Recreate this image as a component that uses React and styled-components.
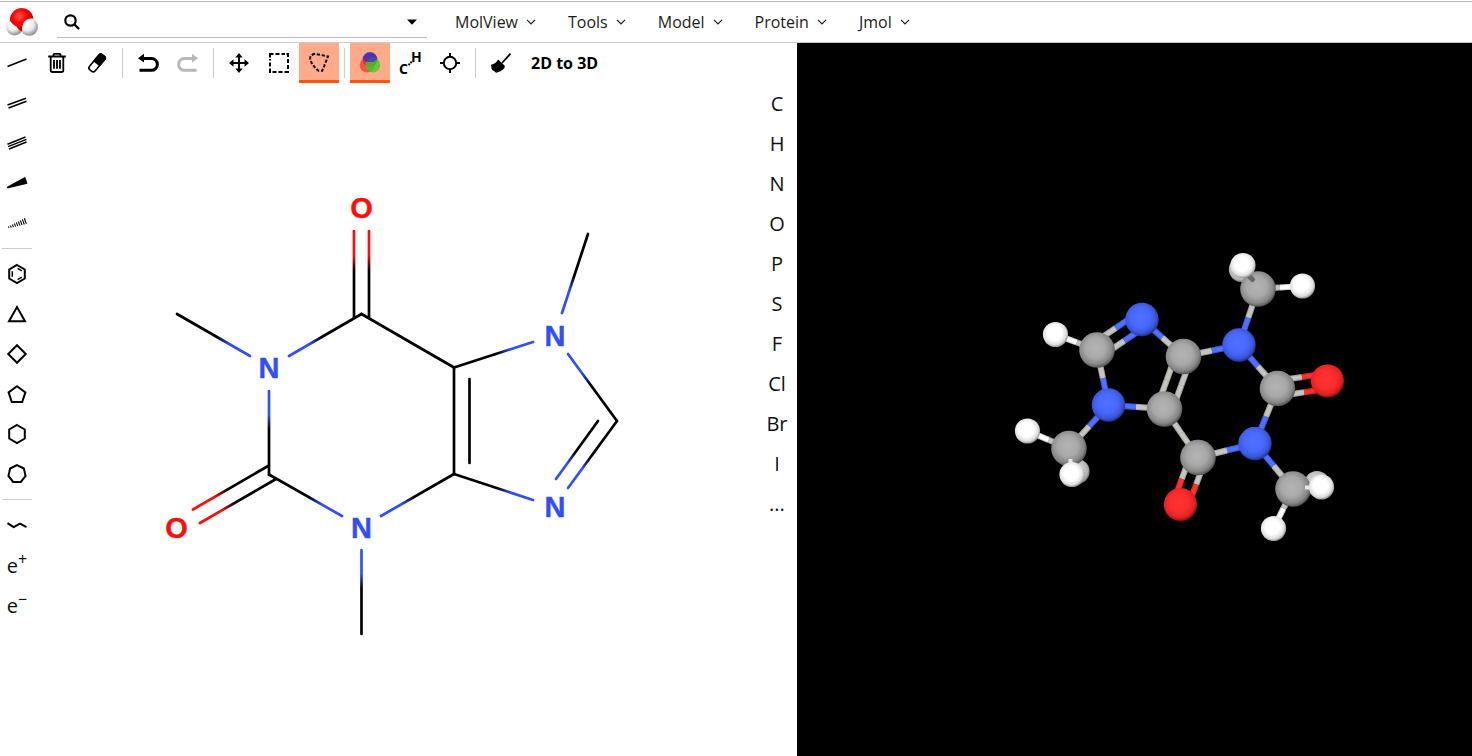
import React from 'react';
import styled, { createGlobalStyle } from 'styled-components';

const GlobalStyle = createGlobalStyle`
  *, *::before, *::after { box-sizing: border-box; }
  body {
    margin: 0;
    background: #fff;
    color: #000;
    font-family: "Open Sans", "Noto Sans", sans-serif;
    font-size: 16px;
  }
  button, input { font: inherit; color: inherit; }
`;

const Page = styled.div`
  min-height: 100vh;
  display: flex;
  flex-direction: column;
`;

const Header = styled.header`
  display: flex;
  align-items: stretch;
  height: 42px;
  margin-top: 1px;
  padding-left: 4px;
  border-top: 1px solid #bbb;
  border-bottom: 1px solid #ccc;
`;

const LogoLink = styled.a`
  display: flex;
  align-items: center;
  width: 36px;
  margin-right: 17px;
`;

const SearchForm = styled.form`
  display: flex;
  align-items: center;
  flex: 0 1 370px;
  margin-bottom: 4px;
  border-bottom: 1px solid #bbb;
`;

const SearchInput = styled.input`
  flex: 1;
  min-width: 0;
  padding: 0 8px;
  border: 0;
  outline: 0;
  background: transparent;
`;

const BareButton = styled.button`
  display: flex;
  align-items: center;
  justify-content: center;
  padding: 0;
  border: 0;
  background: transparent;
  cursor: pointer;
`;

const SearchButton = styled(BareButton)`
  width: 30px;
  height: 30px;
  margin-top: 4px;
`;

const Menu = styled.nav`
  display: flex;
  gap: 32px;
  padding-left: 28px;
`;

const MenuButton = styled(BareButton)`
  gap: 8px;
  color: #1c1c1c;
`;

const Main = styled.main`
  flex: 1;
  display: grid;
  grid-template-columns: minmax(0, 797fr) minmax(0, 675fr);
`;

const Sketcher = styled.section`
  display: grid;
  grid-template-columns: 34px minmax(0, 1fr) 40px;
  grid-template-rows: 40px minmax(0, 1fr);
`;

const BondTools = styled.div`
  grid-row: 1 / 3;
  display: flex;
  flex-direction: column;
`;

const TopTools = styled.div`
  grid-column: 2 / 4;
  display: flex;
  padding-left: 3px;
`;

const Elements = styled.div`
  display: flex;
  flex-direction: column;
`;

const ToolButton = styled(BareButton)`
  flex: 0 0 40px;
  height: 40px;
  color: ${(p) => (p.disabled ? '#b8b8b8' : '#000')};
  background: ${(p) => (p.$active ? '#ffaa88' : 'transparent')};
  box-shadow: ${(p) => (p.$active ? 'inset 0 -3px #ff5511' : 'none')};
`;

const TextTool = styled(BareButton)`
  padding: 0 10px;
  font-weight: 700;
`;

const SymbolButton = styled(ToolButton)`
  font-size: 20px;
  color: #111;
`;

const Charge = styled.sup`
  font-size: 16px;
  line-height: 16px;
  align-self: flex-start;
  margin-top: 6px;
`;

const Divider = styled.span`
  flex: 0 0 1px;
  align-self: stretch;
  background: #ccc;
  margin: ${(p) => (p.$row ? '5px 2px' : '5px')};
`;

const Canvas = styled.svg`
  display: block;
  width: 100%;
  height: 100%;
  min-height: 0;
`;

const Viewer = styled.section`
  background: #000;
  display: grid;
`;

const Icon = ({ children, width = 2 }) => (
  <svg
    width="32"
    height="32"
    viewBox="-16 -16 32 32"
    fill="none"
    stroke="currentColor"
    strokeWidth={width}
    aria-hidden="true"
  >
    {children}
  </svg>
);

const ring = (n, r, turn = -90) =>
  Array.from({ length: n }, (_, i) => {
    const a = ((turn + (360 * i) / n) * Math.PI) / 180;
    return `${(r * Math.cos(a)).toFixed(2)},${(r * Math.sin(a)).toFixed(2)}`;
  }).join(' ');

const bondIcons = [
  ['Single bond', <Icon width={1.6}><path d="M-9.5 3.5 9.5-4" /></Icon>],
  ['Double bond', <Icon width={1.5}><path d="M-9.5 2 9-4.8M-8.5 5 9.5-1.8" /></Icon>],
  ['Triple bond', <Icon width={1.5}><path d="M-9.5 1.2 8.5-6M-9 3.6 9.5-3.6M-8 6 9.5-1" /></Icon>],
  ['Wedge bond', <Icon width={0.8}><path fill="currentColor" d="M-9.7 4 8-5.6 10 .4-9.4 5Z" /></Icon>],
  ['Hash bond', (
    <Icon width={1.1}>
      <path d="M-8.6 3.4l.5 1.4M-6.6 2.5l.8 2M-4.6 1.5l1 2.6M-2.6.5l1.2 3.1M-.6-.5l1.4 3.6M1.4-1.5l1.6 4.1M3.4-2.5l1.7 4.6M5.4-3.6l1.9 5.1M7.3-4.8l2 5.6" />
    </Icon>
  )],
];

const ringIcons = [
  ['Benzene', (
    <Icon>
      <polygon points={ring(6, 9)} />
      <path strokeWidth="1.5" d="M.6-5.6 4.8-3.1M-4.7-2.7V2.7M.6 5.6 4.8 3.1" />
    </Icon>
  )],
  ['Cyclopropane', <Icon><polygon points="0,-7 8,7.2 -8,7.2" /></Icon>],
  ['Cyclobutane', <Icon><polygon points={ring(4, 8.8)} /></Icon>],
  ['Cyclopentane', <Icon><polygon points="0,-7.8 8.4,-1.6 5.2,8 -5.2,8 -8.4,-1.6" /></Icon>],
  ['Cyclohexane', <Icon><polygon points={ring(6, 9)} /></Icon>],
  ['Cycloheptane', <Icon><polygon points={ring(7, 8.8)} /></Icon>],
];

const Undo = () => (
  <>
    <path strokeWidth="3" d="M-5-4.5H3.5a5.8 5.8 0 0 1 0 11.8H-8.5" />
    <path stroke="none" fill="currentColor" d="M-10-4.8-4-9.3V-.5Z" />
  </>
);

const elements = ['C', 'H', 'N', 'O', 'P', 'S', 'F', 'Cl', 'Br', 'I', '...'];
const menus = ['MolView', 'Tools', 'Model', 'Protein', 'Jmol'];

/* Structural formula: [x1, y1, x2, y2, start colour, end colour] */
const BLUE = '#304ff7';
const RED = '#ff0d0d';
const K = '#000';
const flatBonds = [
  [354, 231, 354, 318, RED, K],
  [369, 231, 369, 318, RED, K],
  [289, 356, 361.5, 314, BLUE, K],
  [250, 356, 177, 314, BLUE, K],
  [269, 391, 269, 475, BLUE, K],
  [193, 509.5, 269, 465.5, RED, K],
  [200, 523, 276, 479, RED, K],
  [342, 516, 269, 474.5, BLUE, K],
  [381, 516, 454, 474, BLUE, K],
  [361.5, 550, 361.5, 634, BLUE, K],
  [361.5, 314, 454, 367.5, K, K],
  [533, 342, 454, 367.5, BLUE, K],
  [454, 367.5, 454, 474, K, K],
  [469.5, 379, 469.5, 463, K, K],
  [533, 500, 454, 474, BLUE, K],
  [562, 313, 588, 234, BLUE, K],
  [568, 354, 617, 421, BLUE, K],
  [568, 488, 617, 421, BLUE, K],
  [556, 479, 598, 421, BLUE, K],
];
const flatLabels = [
  ['O', 361.5, 208], ['N', 269, 368], ['O', 176.5, 528],
  ['N', 361.5, 528], ['N', 555, 336], ['N', 555, 507],
];

const Formula = () => (
  <Canvas viewBox="34 83 723 673" role="img" aria-label="Caffeine structural formula">
    <defs>
      {flatBonds.map(([x1, y1, x2, y2, a, b], i) => (
        <linearGradient key={i} id={`bond${i}`} gradientUnits="userSpaceOnUse" x1={x1} y1={y1} x2={x2} y2={y2}>
          <stop offset="0.28" stopColor={a} />
          <stop offset="0.46" stopColor={b} />
        </linearGradient>
      ))}
    </defs>
    {flatBonds.map(([x1, y1, x2, y2], i) => (
      <line key={i} x1={x1} y1={y1} x2={x2} y2={y2} stroke={`url(#bond${i})`} strokeWidth="2.7" strokeLinecap="round" />
    ))}
    {flatLabels.map(([t, x, y], i) => (
      <text
        key={i}
        x={x}
        y={y + 10}
        textAnchor="middle"
        fill={t === 'O' ? RED : BLUE}
        stroke={t === 'O' ? RED : BLUE}
        strokeWidth="0.4"
        fontFamily="'Liberation Sans', Arial, sans-serif"
        fontWeight="700"
        fontSize="29"
      >
        {t}
      </text>
    ))}
  </Canvas>
);

/* Ball-and-stick model */
const radius = { C: 17.8, N: 16.7, O: 16.6, H: 12.6 };
const stick = {
  C: ['#a2a29e', '#c4c4c0'],
  N: ['#3d5ae0', '#5070ff'],
  O: ['#d82222', '#ff3030'],
  H: ['#d0d0d0', '#ffffff'],
};
const atoms = {
  c8: ['C', 1097, 350], n9: ['N', 1142, 319.5], c4: ['C', 1183.5, 356.5],
  c5: ['C', 1164.5, 409], n7: ['N', 1108.5, 405], n3: ['N', 1239, 345],
  c2: ['C', 1277.5, 388.5], o2: ['O', 1327.5, 381], n1: ['N', 1255, 443.5],
  c6: ['C', 1198, 457.5], o6: ['O', 1180.5, 504.5],
  m3: ['C', 1258, 289], m7: ['C', 1069, 448.5], m1: ['C', 1293, 489],
  h8: ['H', 1055.5, 334.5],
  h3a: ['H', 1241.5, 269.5], h3b: ['H', 1243, 265.5], h3c: ['H', 1302.5, 286],
  h7a: ['H', 1027.5, 431], h7b: ['H', 1077, 471.5], h7c: ['H', 1072, 474.5],
  h1a: ['H', 1317, 483.5], h1b: ['H', 1321.5, 487], h1c: ['H', 1273.5, 528.5],
};
const sticks = [
  ['c8', 'n9', 2], ['n9', 'c4'], ['c4', 'c5', 2], ['c5', 'n7'], ['n7', 'c8'],
  ['c4', 'n3'], ['n3', 'c2'], ['c2', 'o2', 2], ['c2', 'n1'], ['n1', 'c6'],
  ['c6', 'c5'], ['c6', 'o6', 2], ['n3', 'm3'], ['n7', 'm7'], ['n1', 'm1'],
  ['h8', 'c8'], ['h3c', 'm3'], ['h7a', 'm7'], ['h1c', 'm1'],
];
const farAtoms = ['h3a', 'h7b', 'h1a'];
const nearAtoms = ['h3b', 'h7c', 'h1b'];
const midAtoms = Object.keys(atoms).filter((k) => !farAtoms.includes(k) && !nearAtoms.includes(k));

const Ball = ({ id, dim }) => {
  const [el, x, y] = atoms[id];
  return <circle cx={x} cy={y} r={radius[el]} fill={`url(#ball${el})`} opacity={dim ? 0.8 : 1} />;
};

const Stick = ({ from, to, order = 1 }) => {
  const [ea, ax, ay] = atoms[from];
  const [eb, bx, by] = atoms[to];
  const len = Math.hypot(bx - ax, by - ay);
  const ux = (bx - ax) / len;
  const uy = (by - ay) / len;
  const mid = ea === 'H' ? (len + radius.H - radius.C) / 2 + 3 : (radius[ea] + len - radius[eb]) / 2;
  const shifts = order === 2 ? [-7.7, 7.7] : [0];
  return shifts.map((s) => {
    const ox = -uy * s;
    const oy = ux * s;
    const mx = ax + ux * mid;
    const my = ay + uy * mid;
    return [6.2, 4.2].map((w, i) => (
      <g key={`${s}-${w}`} strokeWidth={w}>
        <line x1={ax + ox} y1={ay + oy} x2={mx + ox} y2={my + oy} stroke={stick[ea][i]} />
        <line x1={mx + ox} y1={my + oy} x2={bx + ox} y2={by + oy} stroke={stick[eb][i]} />
      </g>
    ));
  });
};

const balls = {
  C: ['#b4b4b4', '#a8a8a8', '#868686', '#484848'],
  N: ['#5070ff', '#4869ff', '#3a56d8', '#1e2d78'],
  O: ['#ff3434', '#ff2c2c', '#e02222', '#780c0c'],
  H: ['#ffffff', '#ffffff', '#dedede', '#808080'],
};

const Model = () => (
  <Canvas viewBox="797 43 675 713" role="img" aria-label="Caffeine ball-and-stick model">
    <defs>
      {Object.entries(balls).map(([el, c]) => (
        <radialGradient key={el} id={`ball${el}`} cx="0.46" cy="0.44" r="0.58">
          <stop offset="0" stopColor={c[0]} />
          <stop offset="0.5" stopColor={c[1]} />
          <stop offset="0.8" stopColor={c[2]} />
          <stop offset="1" stopColor={c[3]} />
        </radialGradient>
      ))}
    </defs>
    {farAtoms.map((id) => <Ball key={id} id={id} dim />)}
    {sticks.map(([a, b, n]) => <Stick key={a + b} from={a} to={b} order={n} />)}
    {midAtoms.map((id) => <Ball key={id} id={id} />)}
    <path d="M1249 276 1252.500 279.500" stroke="#686868" strokeWidth="5" strokeLinecap="round" />
    <path d="M1070.500 459v6M1311 487.500h-6" stroke="#e8e8e8" strokeWidth="4" />
    {nearAtoms.map((id) => <Ball key={id} id={id} />)}
  </Canvas>
);

const Logo = () => (
  <svg width="36" height="36" viewBox="4 4 36 36" aria-hidden="true">
    <defs>
      <radialGradient id="logoRed" cx="0.4" cy="0.35" r="0.65">
        <stop offset="0" stopColor="#ff5a50" />
        <stop offset="0.4" stopColor="#fa0a0a" />
        <stop offset="1" stopColor="#b80000" />
      </radialGradient>
      <radialGradient id="logoWhite" cx="0.4" cy="0.35" r="0.65">
        <stop offset="0" stopColor="#fff" />
        <stop offset="0.55" stopColor="#ececec" />
        <stop offset="1" stopColor="#8e8e8e" />
      </radialGradient>
    </defs>
    <circle cx="14.6" cy="27" r="8.5" fill="url(#logoWhite)" />
    <circle cx="29.2" cy="27" r="8.7" fill="url(#logoWhite)" />
    <path fill="url(#logoRed)" d="M21.8 8a12 12 0 0 1 11.8 10.7C27 17.5 22 21 21.9 31.5 19 30.8 17.500 28 16.5 26.500 14.500 25 11.500 23.800 9.9 20.500A12 12 0 0 1 21.800 8Z" />
  </svg>
);

export default function App() {
  return (
    <Page>
      <GlobalStyle />
      <Header>
        <LogoLink href="#" aria-label="MolView home"><Logo /></LogoLink>
        <SearchForm role="search" onSubmit={(e) => e.preventDefault()}>
          <SearchButton type="submit" aria-label="Search">
            <svg width="18" height="18" viewBox="0 0 18 18" fill="none" stroke="currentColor" strokeWidth="2.2" aria-hidden="true">
              <circle cx="7.5" cy="7.5" r="5.2" />
              <path d="M11.2 11.2 16 16" />
            </svg>
          </SearchButton>
          <SearchInput type="text" aria-label="Search molecules" />
          <SearchButton type="button" aria-label="Search options">
            <svg width="10" height="6" viewBox="0 0 10 6" aria-hidden="true"><path d="M0 .5H10L5 5.8Z" /></svg>
          </SearchButton>
        </SearchForm>
        <Menu aria-label="Main menu">
          {menus.map((m) => (
            <MenuButton key={m} type="button">
              {m}
              <svg width="10" height="6" viewBox="0 0 10 6" fill="none" stroke="currentColor" strokeWidth="1.2" aria-hidden="true">
                <path d="M1 .8 5 4.8 9 .8" />
              </svg>
            </MenuButton>
          ))}
        </Menu>
      </Header>
      <Main>
        <Sketcher aria-label="Sketcher">
          <BondTools role="toolbar" aria-label="Bonds and rings">
            {bondIcons.map(([name, icon]) => (
              <ToolButton key={name} type="button" aria-label={name}>{icon}</ToolButton>
            ))}
            <Divider $row />
            {ringIcons.map(([name, icon]) => (
              <ToolButton key={name} type="button" aria-label={name}>{icon}</ToolButton>
            ))}
            <Divider $row />
            <ToolButton type="button" aria-label="Carbon chain">
              <Icon><path strokeLinejoin="round" d="M-9.5-1.8-3.3 2.2 3-1.3 9.5 2.2" /></Icon>
            </ToolButton>
            <SymbolButton type="button" aria-label="Positive charge">e<Charge>+</Charge></SymbolButton>
            <SymbolButton type="button" aria-label="Negative charge">e<Charge>−</Charge></SymbolButton>
          </BondTools>
          <TopTools role="toolbar" aria-label="Sketch tools">
            <ToolButton type="button" aria-label="Clear all">
              <Icon width={1.8}>
                <path d="M-8.8-6.5H8.8M-3.5-6.5V-8.2q0-1 1-1H2.5q1 0 1 1V-6.5M-6.3-6.5V7.2q0 1.8 1.8 1.8H4.5q1.8 0 1.8-1.8V-6.5M-3-3V5.8M0-3V5.8M3-3V5.8" />
              </Icon>
            </ToolButton>
            <ToolButton type="button" aria-label="Erase">
              <Icon>
                <g transform="rotate(40)">
                  <rect x="-3.6" y="-9.8" width="7.2" height="19.6" rx="2.5" strokeWidth="1.6" />
                  <path fill="currentColor" stroke="none" d="M-4.4 1V-8q0-2.6 2.6-2.6H1.8q2.6 0 2.6 2.6V1Z" />
                </g>
              </Icon>
            </ToolButton>
            <Divider />
            <ToolButton type="button" aria-label="Undo"><Icon><Undo /></Icon></ToolButton>
            <ToolButton type="button" aria-label="Redo" disabled>
              <Icon><g transform="scale(-1 1)"><Undo /></g></Icon>
            </ToolButton>
            <Divider />
            <ToolButton type="button" aria-label="Move">
              <Icon>
                <path d="M-7 0H7M0-7V7" />
                <path fill="currentColor" stroke="none" d="M-10 0-5.5-3.7V3.7ZM10 0 5.5-3.7V3.7ZM0-10-3.7-5.5H3.7ZM0 10-3.7 5.5H3.7Z" />
              </Icon>
            </ToolButton>
            <ToolButton type="button" aria-label="Rectangle select">
              <Icon>
                <path d="M-9-5.5V-9H-5.5M-3.5-9H.5M2.5-9H6M7.5-9H9V-6M9-4V0M9 2V6M9 8V9H5.5M3.5 9H-.5M-2.5 9H-6.5M-8 9H-9V5.5M-9 3.5V-.5M-9-2.5V-4" />
              </Icon>
            </ToolButton>
            <ToolButton type="button" aria-label="Lasso select" aria-pressed="true" $active>
              <Icon>
                <path strokeDasharray="3.2 1.8" d="M-8.8-3.5Q-9.5-8-4-9.2L9-6.6 3.2 7.8-.5 7.8Q-6.5 3-8.800-3.5Z" />
              </Icon>
            </ToolButton>
            <Divider />
            <ToolButton type="button" aria-label="Color atoms" aria-pressed="true" $active>
              <Icon>
                <g stroke="none">
                  <circle cx="0" cy="-3.5" r="7.4" fill="#5c3cc4" />
                  <circle cx="-2.8" cy="2" r="7.4" fill="#ff3028" fillOpacity="0.75" />
                  <circle cx="2.8" cy="2" r="7.4" fill="#34d024" fillOpacity="0.75" />
                  <path fill="#4430b4" fillOpacity="0.75" d="M-7.2-4A7.4 7.4 0 0 1 7.2-4 7.400 7.400 0 0 1 0-1 7.400 7.400 0 0 1-7.200-4Z" />
                </g>
              </Icon>
            </ToolButton>
            <ToolButton type="button" aria-label="Skeletal formula">
              <Icon>
                <g fill="currentColor" stroke="none" fontWeight="700" fontSize="14">
                  <text x="-11" y="11">C</text>
                  <text x="1" y="-1">H</text>
                </g>
                <path strokeDasharray="1.8 1" d="M-1.5 2 2-1.5" />
              </Icon>
            </ToolButton>
            <ToolButton type="button" aria-label="Center structure">
              <Icon><circle r="6.2" /><path d="M-10 0H-6M6 0H10M0-10V-6M0 6V10" /></Icon>
            </ToolButton>
            <Divider />
            <ToolButton type="button" aria-label="Clean structure">
              <Icon>
                <path strokeWidth="1.8" d="M1 0 9.5-9.3" />
                <path fill="currentColor" stroke="none" d="M-10 1.800Q-6 1.500-2.800-3.500L3.800 2.800Q4.500 7-4.500 9.700-6.500 9.500-7 7.500L-7.800 8-9.500 5.500Z" />
              </Icon>
            </ToolButton>
            <TextTool type="button">2D to 3D</TextTool>
          </TopTools>
          <Formula />
          <Elements role="toolbar" aria-label="Elements">
            {elements.map((e) => (
              <SymbolButton key={e} type="button">{e}</SymbolButton>
            ))}
          </Elements>
        </Sketcher>
        <Viewer aria-label="3D model"><Model /></Viewer>
      </Main>
    </Page>
  );
}
